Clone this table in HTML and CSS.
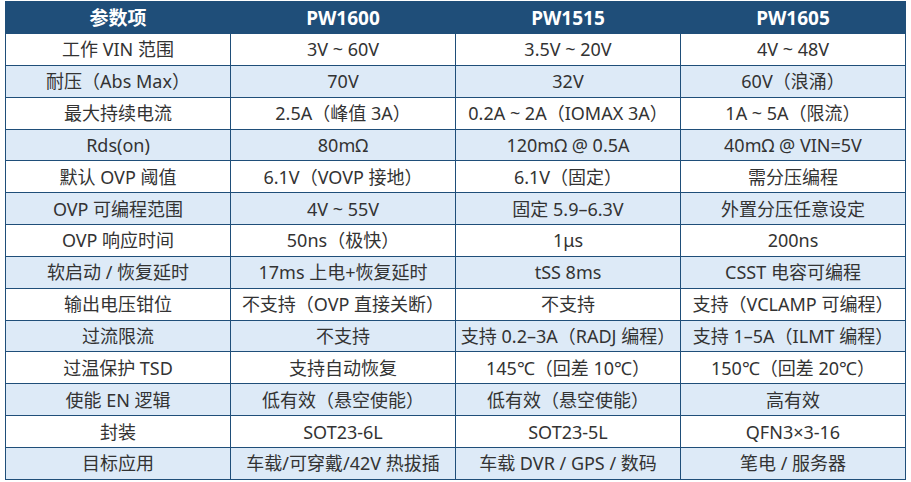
FILE: index.html
```html
<!DOCTYPE html>
<html lang="zh-CN">
<head>
<meta charset="utf-8">
<title>PW1600 / PW1515 / PW1605 参数对比</title>
<link rel="stylesheet" href="styles.css">
</head>
<body>
<table class="spec">
  <colgroup><col class="c"><col class="c"><col class="c"><col class="c"></colgroup>
  <thead>
    <tr><th>参数项</th><th>PW1600</th><th>PW1515</th><th>PW1605</th></tr>
  </thead>
  <tbody>
    <tr><td>工作 VIN 范围</td><td>3V ~ 60V</td><td>3.5V ~ 20V</td><td>4V ~ 48V</td></tr>
    <tr><td>耐压（Abs Max）</td><td>70V</td><td>32V</td><td>60V（浪涌）</td></tr>
    <tr><td>最大持续电流</td><td>2.5A（峰值 3A）</td><td>0.2A ~ 2A（IOMAX 3A）</td><td>1A ~ 5A（限流）</td></tr>
    <tr><td>Rds(on)</td><td>80mΩ</td><td>120mΩ @ 0.5A</td><td>40mΩ @ VIN=5V</td></tr>
    <tr><td>默认 OVP 阈值</td><td>6.1V（VOVP 接地）</td><td>6.1V（固定）</td><td>需分压编程</td></tr>
    <tr><td>OVP 可编程范围</td><td>4V ~ 55V</td><td>固定 5.9–6.3V</td><td>外置分压任意设定</td></tr>
    <tr><td>OVP 响应时间</td><td>50ns（极快）</td><td>1μs</td><td>200ns</td></tr>
    <tr><td>软启动 / 恢复延时</td><td>17ms 上电+恢复延时</td><td>tSS 8ms</td><td>CSST 电容可编程</td></tr>
    <tr><td>输出电压钳位</td><td>不支持（OVP 直接关断）</td><td>不支持</td><td>支持（VCLAMP 可编程）</td></tr>
    <tr><td>过流限流</td><td>不支持</td><td>支持 0.2–3A（RADJ 编程）</td><td>支持 1–5A（ILMT 编程）</td></tr>
    <tr><td>过温保护 TSD</td><td>支持自动恢复</td><td>145℃（回差 10℃）</td><td>150℃（回差 20℃）</td></tr>
    <tr><td>使能 EN 逻辑</td><td>低有效（悬空使能）</td><td>低有效（悬空使能）</td><td>高有效</td></tr>
    <tr><td>封装</td><td>SOT23-6L</td><td>SOT23-5L</td><td>QFN3×3-16</td></tr>
    <tr><td>目标应用</td><td>车载/可穿戴/42V 热拔插</td><td>车载 DVR / GPS / 数码</td><td>笔电 / 服务器</td></tr>
  </tbody>
</table>
</body>
</html>
```

FILE: styles.css
```css
html, body {
  margin: 0;
  padding: 0;
  background: #ffffff;
}
body {
  padding: 1px 0 0 5px;
  font-family: "Noto Sans", "Noto Sans CJK SC", sans-serif;
}
.spec {
  border-collapse: collapse;
  table-layout: fixed;
  width: 901px;
  font-size: 18px;
  color: #333333;
}
.spec .c {
  width: 25%;
}
.spec th,
.spec td {
  border: 1px solid #1f4e79;
  text-align: center;
  vertical-align: middle;
  padding: 0;
  white-space: nowrap;
  line-height: 24px;
}
.spec th {
  background: #1f4e79;
  color: #ffffff;
  font-weight: 700;
  font-size: 19px;
  height: 31px;
}
.spec td {
  height: 30.85px;
}
.spec tbody tr:nth-child(even) td {
  background: #ddeaf7;
}
```
